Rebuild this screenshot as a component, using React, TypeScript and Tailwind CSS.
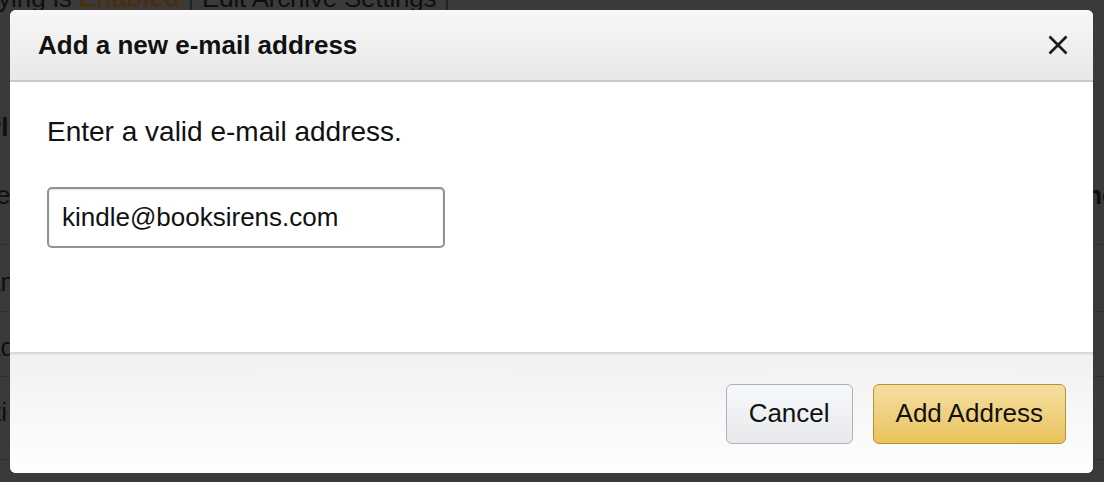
import { useState } from 'react';

const font = { fontFamily: '"Liberation Sans", Arial, Helvetica, sans-serif' };

function BackgroundPage() {
  return (
    <div className="h-[482px] w-[1104px] overflow-hidden bg-[#3a3a3a] text-[#0f0f0f]" style={font}>
      <div className="-mt-[17px] flex items-center gap-[10px] whitespace-nowrap text-[26px] leading-[30px]">
        <span className="-ml-[2px]">ying is <b className="text-[#4a2f0c]">Enabled</b></span>
        <span className="h-[30px] w-[2px] bg-[#222]" />
        <span className="-tracking-[0.2px]">Edit Archive Settings</span>
        <span className="h-[30px] w-[2px] bg-[#222]" />
      </div>
      <div className="mt-[99px] -ml-[16px] text-[26px] font-bold leading-[30px]">Pl</div>
      <div className="mt-[38px] flex justify-between text-[26px] leading-[30px]">
        <span className="-ml-[4px]">ev</span>
        <span className="-mr-[14px] font-bold">nd</span>
      </div>
      <div className="mt-[34px] h-px bg-[#313131]" />
      <div className="mt-[22px] -ml-[14px] text-[26px] leading-[30px]">am</div>
      <div className="mt-[14px] h-px bg-[#313131]" />
      <div className="mt-[20px] -ml-[14px] text-[26px] leading-[30px]">ad</div>
      <div className="mt-[14px] h-px bg-[#313131]" />
      <div className="mt-[20px] -ml-[6px] text-[26px] leading-[30px]">ti</div>
      <div className="mt-[32px] h-px bg-[#313131]" />
    </div>
  );
}

export default function App() {
  const [email, setEmail] = useState('kindle@booksirens.com');

  return (
    <div className="relative h-[482px] w-[1104px] overflow-hidden" style={font}>
      <BackgroundPage />
      <div className="absolute left-[10px] top-[10px] flex h-[463px] w-[1083px] flex-col overflow-hidden rounded-[6px] bg-white text-[#111]">
        <div className="flex h-[72px] shrink-0 items-center justify-between border-b-2 border-[#c9c9c9] bg-gradient-to-b from-[#f7f7f7] to-[#e8e8e8] pl-[28px] pr-[25px]">
          <h2 className="text-[26px] font-bold leading-[30px] text-[#111]">Add a new e-mail address</h2>
          <button className="flex h-[20px] w-[20px] items-center justify-center" aria-label="Close">
            <svg width="20" height="20" viewBox="0 0 20 20">
              <path d="M1.5 1.5 L18.5 18.5 M18.5 1.5 L1.5 18.5" stroke="#1a1a1a" strokeWidth="2.6" strokeLinecap="butt" />
            </svg>
          </button>
        </div>
        <div className="flex-1 px-[37px] pt-[34px]">
          <p className="text-[28px] leading-[32px]">Enter a valid e-mail address.</p>
          <input
            className="mt-[39px] h-[61px] w-[398px] rounded-[5px] border-2 border-[#8f9393] px-[13px] text-[26px] text-[#111] shadow-[inset_0_1px_2px_rgba(0,0,0,0.12)] outline-none"
            value={email}
            onChange={e => setEmail(e.target.value)}
          />
        </div>
        <div className="flex h-[121px] shrink-0 items-center justify-end gap-[20px] border-t-2 border-[#d9d9d9] bg-gradient-to-b from-[#f1f1f1] to-[#fefefe] pr-[27px] shadow-[inset_0_1px_2px_rgba(0,0,0,0.04)]">
          <button className="h-[60px] rounded-[6px] border border-[#adb1b8] bg-gradient-to-b from-[#f7f8fa] to-[#e7e9ec] px-[22px] text-[26px] text-[#111]">
            Cancel
          </button>
          <button className="h-[60px] rounded-[6px] border border-[#b3922f] bg-gradient-to-b from-[#f5dea0] to-[#eac35c] px-[22px] text-[26px] text-[#111]">
            Add Address
          </button>
        </div>
      </div>
    </div>
  );
}
